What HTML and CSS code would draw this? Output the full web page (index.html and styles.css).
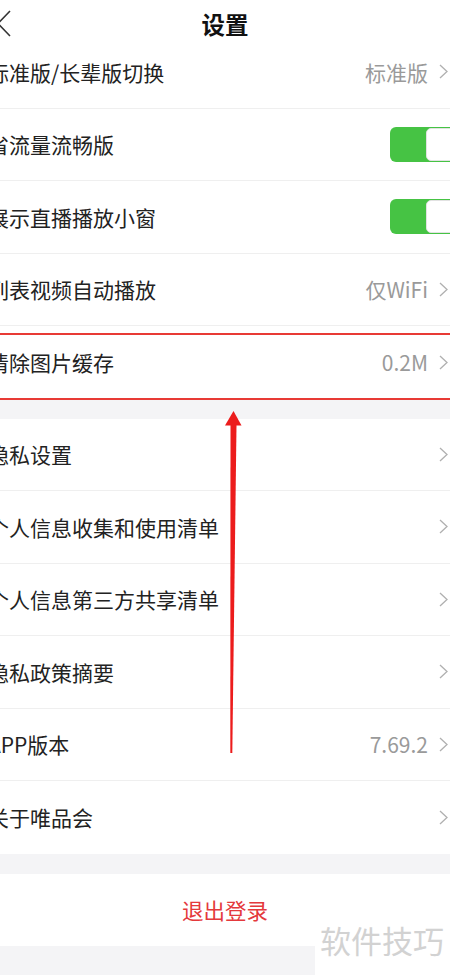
FILE: index.html
```html
<!DOCTYPE html>
<html lang="zh-CN">
<head>
<meta charset="utf-8">
<title>设置</title>
<link rel="stylesheet" href="styles.css">
</head>
<body>
<div class="page">
  <header class="header">
    <svg class="back" width="14" height="28" viewBox="0 0 14 28"><polyline points="12,1 0,13.5 12,26" fill="none" stroke="#333" stroke-width="1.6"/></svg>
    <h1 class="title">设置</h1>
  </header>

  <section class="group">
    <div class="row"><span class="label">标准版/长辈版切换</span><span class="right"><span class="value">标准版</span><svg class="chev" width="9" height="15" viewBox="0 0 9 15"><polyline points="1,1 8,7.5 1,14" fill="none" stroke="#b0b0b0" stroke-width="1.3"/></svg></span></div>
    <div class="row"><span class="label">省流量流畅版</span><span class="toggle"><span class="knob"></span></span></div>
    <div class="row"><span class="label">展示直播播放小窗</span><span class="toggle"><span class="knob"></span></span></div>
    <div class="row"><span class="label">列表视频自动播放</span><span class="right"><span class="value">仅WiFi</span><svg class="chev" width="9" height="15" viewBox="0 0 9 15"><polyline points="1,1 8,7.5 1,14" fill="none" stroke="#b0b0b0" stroke-width="1.3"/></svg></span></div>
    <div class="row"><span class="label">清除图片缓存</span><span class="right"><span class="value">0.2M</span><svg class="chev" width="9" height="15" viewBox="0 0 9 15"><polyline points="1,1 8,7.5 1,14" fill="none" stroke="#b0b0b0" stroke-width="1.3"/></svg></span></div>
  </section>

  <div class="gap"></div>

  <section class="group">
    <div class="row"><span class="label">隐私设置</span><span class="right"><svg class="chev" width="9" height="15" viewBox="0 0 9 15"><polyline points="1,1 8,7.5 1,14" fill="none" stroke="#b0b0b0" stroke-width="1.3"/></svg></span></div>
    <div class="row"><span class="label">个人信息收集和使用清单</span><span class="right"><svg class="chev" width="9" height="15" viewBox="0 0 9 15"><polyline points="1,1 8,7.5 1,14" fill="none" stroke="#b0b0b0" stroke-width="1.3"/></svg></span></div>
    <div class="row"><span class="label">个人信息第三方共享清单</span><span class="right"><svg class="chev" width="9" height="15" viewBox="0 0 9 15"><polyline points="1,1 8,7.5 1,14" fill="none" stroke="#b0b0b0" stroke-width="1.3"/></svg></span></div>
    <div class="row"><span class="label">隐私政策摘要</span><span class="right"><svg class="chev" width="9" height="15" viewBox="0 0 9 15"><polyline points="1,1 8,7.5 1,14" fill="none" stroke="#b0b0b0" stroke-width="1.3"/></svg></span></div>
    <div class="row"><span class="label">APP版本</span><span class="right"><span class="value">7.69.2</span><svg class="chev" width="9" height="15" viewBox="0 0 9 15"><polyline points="1,1 8,7.5 1,14" fill="none" stroke="#b0b0b0" stroke-width="1.3"/></svg></span></div>
    <div class="row"><span class="label">关于唯品会</span><span class="right"><svg class="chev" width="9" height="15" viewBox="0 0 9 15"><polyline points="1,1 8,7.5 1,14" fill="none" stroke="#b0b0b0" stroke-width="1.3"/></svg></span></div>
  </section>

  <div class="gap"></div>

  <section class="logout">退出登录</section>

  <div class="bottom"></div>

  <div class="mark-top"></div>
  <div class="mark-bottom"></div>
  <svg class="arrow" width="20" height="350" viewBox="225 405 20 350">
    <polygon points="233.5,411 225,425.5 241.5,425.5" fill="#ec1c1c"/>
    <polygon points="230.5,425 236.5,425 232.3,753 230.3,753" fill="#ec1c1c"/>
  </svg>
  <div class="watermark">软件技巧</div>
</div>
</body>
</html>
```

FILE: styles.css
```css
* { box-sizing: border-box; margin: 0; padding: 0; }

body {
  margin: 0;
  background: #f4f4f6;
  font-family: "Noto Sans CJK SC", "Noto Sans", sans-serif;
  color: #222;
}

.page {
  position: relative;
  width: 450px;
  height: 975px;
  overflow: hidden;
  background: #f4f4f6;
}

.header {
  height: 36px;
  background: #fff;
  display: flex;
  justify-content: center;
  position: relative;
}

.back {
  position: absolute;
  left: -2px;
  top: 9.5px;
}

.title {
  font-size: 23.5px;
  font-weight: 700;
  line-height: 28px;
  padding-top: 10px;
  color: #111;
}

.group {
  background: #fff;
}

.row {
  height: 72.5px;
  display: flex;
  align-items: center;
  justify-content: space-between;
  border-bottom: 1px solid #efefef;
  padding-right: 2px;
}

.group .row:last-child { border-bottom: none; }

.label {
  margin-left: -12px;
  font-size: 21px;
  line-height: 28px;
  color: #222;
  white-space: nowrap;
}

.right {
  display: flex;
  align-items: center;
  gap: 11px;
}

.value {
  font-size: 21px;
  line-height: 28px;
  color: #9a9a9a;
}

.chev { display: block; }

.toggle {
  width: 70px;
  height: 35px;
  margin-right: -12px;
  background: #46c344;
  border-radius: 6px;
  padding: 1px 0 1px 36px;
  display: flex;
}

.knob {
  flex: 1;
  background: #fff;
  border: 1px solid #e2e2e2;
  border-radius: 5px;
}

.gap { height: 20px; }

.logout {
  height: 72px;
  background: #fff;
  display: flex;
  align-items: center;
  justify-content: center;
  font-size: 21.5px;
  color: #e4393c;
}

.mark-top,
.mark-bottom {
  position: absolute;
  left: 0;
  width: 450px;
  height: 2.3px;
  background: #e83a35;
}
.mark-top { top: 332.8px; }
.mark-bottom { top: 397.8px; }

.arrow {
  position: absolute;
  left: 225px;
  top: 405px;
}

.watermark {
  position: absolute;
  left: 315px;
  top: 915px;
  width: 135px;
  height: 60px;
  background: #fff;
  font-size: 31px;
  line-height: 50px;
  color: #d2d2d2;
  padding-left: 5px;
  white-space: nowrap;
}
```
